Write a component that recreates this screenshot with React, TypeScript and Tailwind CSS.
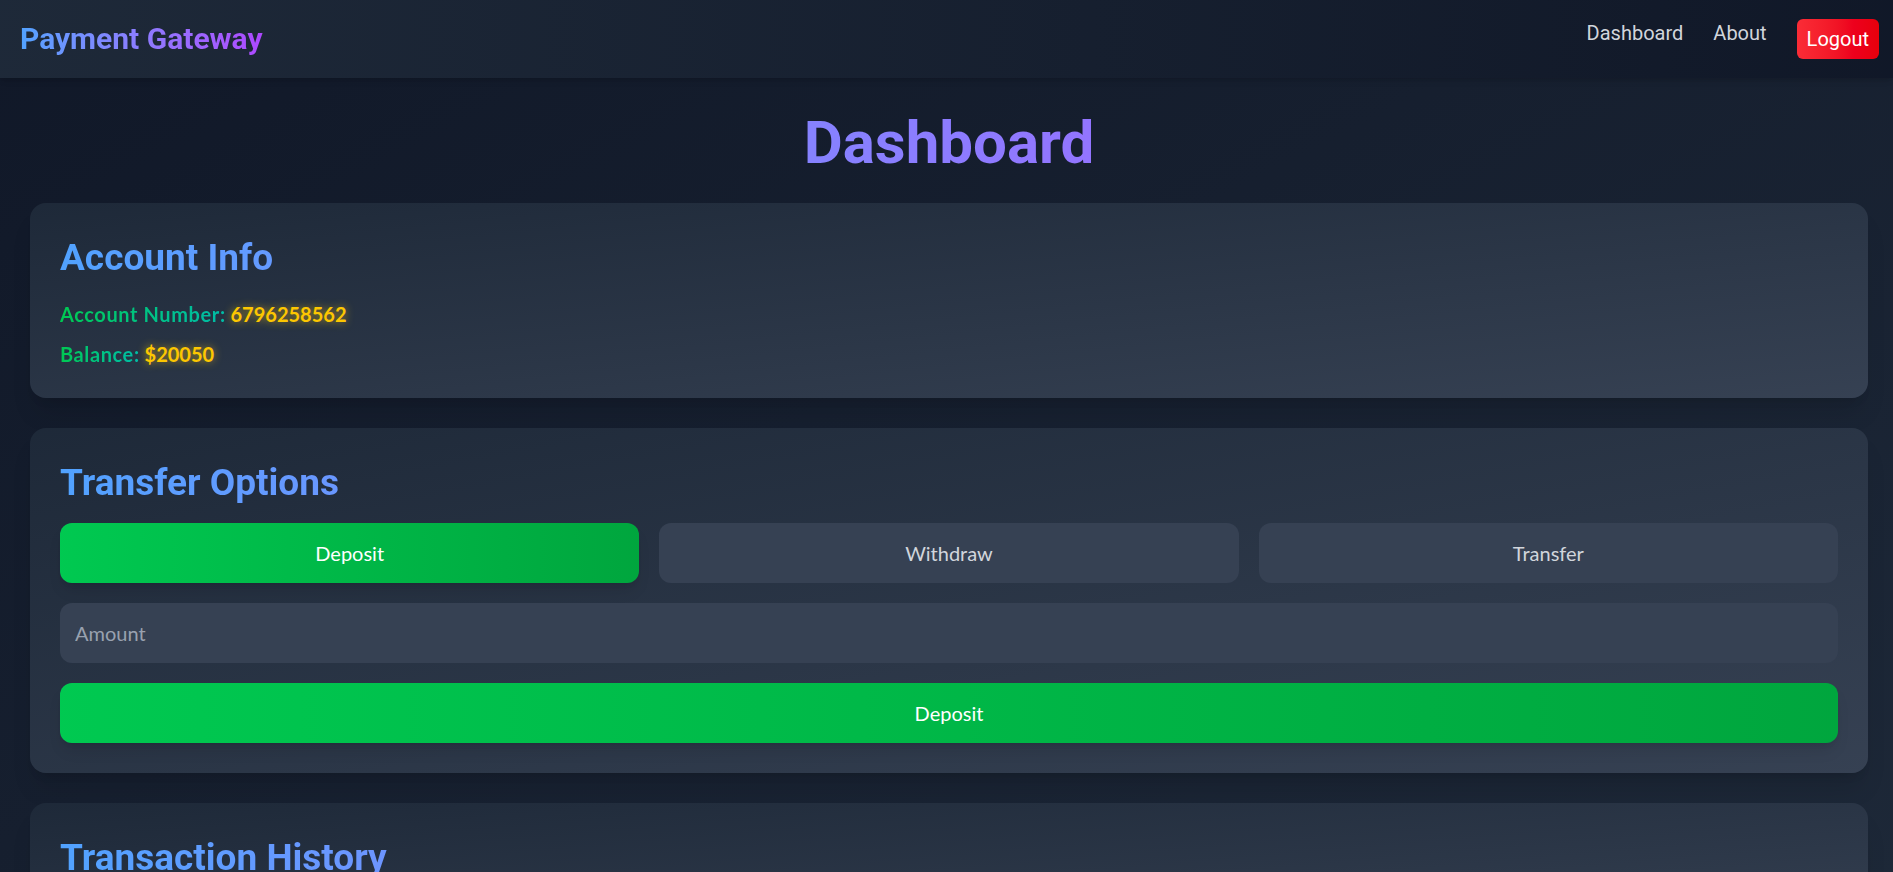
import { useState } from "react";

const tabs = ["Deposit", "Withdraw", "Transfer"];

export default function App() {
  const [mode, setMode] = useState("Deposit");
  const [amount, setAmount] = useState("");

  return (
    <div className="min-h-screen bg-linear-to-br from-gray-900 to-gray-800 font-['Lato',sans-serif]">
      <nav className="h-[78px] flex items-center justify-between pl-5 pr-[14px] bg-linear-to-r from-gray-800 to-gray-900 shadow-md">
        <span className="font-['Roboto',sans-serif] text-3xl font-bold bg-linear-to-r from-blue-400 to-purple-500 bg-clip-text text-transparent">
          Payment Gateway
        </span>
        <div className="flex items-center gap-[30px] font-['Roboto',sans-serif] text-xl">
          <a className="text-gray-300 mb-3 cursor-pointer">Dashboard</a>
          <a className="text-gray-300 mb-3 cursor-pointer">About</a>
          <button className="px-[10px] py-1.5 leading-7 rounded-md bg-linear-to-r from-red-500 to-red-600 text-white">
            Logout
          </button>
        </div>
      </nav>

      <main className="pt-[35px] pb-10 pl-[30px] pr-[25px]">
        <h1 className="font-['Roboto',sans-serif] text-6xl leading-none font-bold text-center bg-linear-to-r from-blue-400 to-purple-500 bg-clip-text text-transparent mb-[30px]">
          Dashboard
        </h1>

        <div className="flex flex-col gap-[30px]">
          <section className="rounded-2xl p-[30px] bg-linear-to-br from-gray-800 to-gray-700 shadow-xl">
            <h2 className="font-['Roboto',sans-serif] text-[37px] leading-[50px] font-bold bg-linear-to-r from-blue-400 to-purple-500 bg-clip-text text-transparent mb-[17px]">
              Account Info
            </h2>
            <div className="flex flex-col gap-3 text-[20px] leading-7 font-bold">
              <p>
                <span className="tracking-[0.6px] bg-linear-to-r from-green-500 to-teal-500 bg-clip-text text-transparent">Account Number:</span>{" "}
                <span className="text-yellow-400 [text-shadow:0_0_8px_rgba(250,204,21,0.65)]">6796258562</span>
              </p>
              <p>
                <span className="tracking-[0.6px] bg-linear-to-r from-green-500 to-teal-500 bg-clip-text text-transparent">Balance:</span>{" "}
                <span className="text-yellow-400 [text-shadow:0_0_8px_rgba(250,204,21,0.65)]">$20050</span>
              </p>
            </div>
          </section>

          <section className="rounded-2xl p-[30px] bg-linear-to-br from-gray-800 to-gray-700 shadow-xl">
            <h2 className="font-['Roboto',sans-serif] text-[37px] leading-[50px] font-bold bg-linear-to-r from-blue-400 to-purple-500 bg-clip-text text-transparent mb-[15px]">
              Transfer Options
            </h2>
            <div className="grid grid-cols-3 gap-5 mb-5">
              {tabs.map((t) => (
                <button
                  key={t}
                  onClick={() => setMode(t)}
                  className={
                    mode === t
                      ? "h-[60px] rounded-xl text-[20px] text-white bg-linear-to-r from-green-500 to-green-600 shadow-lg"
                      : "h-[60px] rounded-xl text-[20px] text-gray-300 bg-gray-700"
                  }
                >
                  {t}
                </button>
              ))}
            </div>
            <input
              value={amount}
              onChange={(e) => setAmount(e.target.value)}
              placeholder="Amount"
              className="w-full h-[60px] rounded-xl bg-gray-700 px-[15px] text-[20px] text-white placeholder:text-gray-400 outline-none mb-5"
            />
            <button className="w-full h-[60px] rounded-xl text-[20px] text-white bg-linear-to-r from-green-500 to-green-600 shadow-lg">
              {mode}
            </button>
          </section>

          <section className="rounded-2xl p-[30px] bg-linear-to-br from-gray-800 to-gray-700 shadow-xl">
            <h2 className="font-['Roboto',sans-serif] text-[37px] leading-[50px] font-bold bg-linear-to-r from-blue-400 to-purple-500 bg-clip-text text-transparent mb-[15px]">
              Transaction History
            </h2>
            <p className="text-[20px] text-gray-400">No transactions yet.</p>
          </section>
        </div>
      </main>
    </div>
  );
}
